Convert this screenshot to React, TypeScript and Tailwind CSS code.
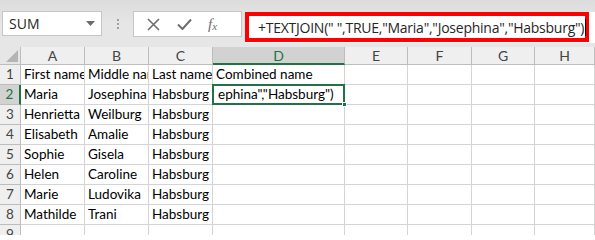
import React from "react";

const cols = [
  { l: "A", w: 64 },
  { l: "B", w: 64 },
  { l: "C", w: 64 },
  { l: "D", w: 132 },
  { l: "E", w: 63 },
  { l: "F", w: 64 },
  { l: "G", w: 63 },
  { l: "H", w: 60 },
];

const data: string[][] = [
  ["First name", "Middle name", "Last name", "Combined name"],
  ["Maria", "Josephina", "Habsburg", ""],
  ["Henrietta", "Weilburg", "Habsburg", ""],
  ["Elisabeth", "Amalie", "Habsburg", ""],
  ["Sophie", "Gisela", "Habsburg", ""],
  ["Helen", "Caroline", "Habsburg", ""],
  ["Marie", "Ludovika", "Habsburg", ""],
  ["Mathilde", "Trani", "Habsburg", ""],
  ["", "", "", ""],
];

export default function App() {
  return (
    <div className="w-[595px] h-[235px] overflow-hidden bg-white" style={{ fontFamily: "Lato, 'Liberation Sans', sans-serif" }}>
      {/* Toolbar */}
      <div className="relative h-[47px] bg-gradient-to-b from-[#dcdcdc] via-[#e6e6e6] to-[#e6e6e6]" style={{ fontFamily: "'Open Sans', 'Liberation Sans', sans-serif" }}>
        <div className="absolute left-[2px] top-[11px] w-[100px] h-[25px] bg-white border border-[#c6c6c6] flex items-center pl-[6px] text-[14px] text-[#262626]">
          SUM
          <svg className="absolute right-[6px] top-[9px]" width="9" height="5" viewBox="0 0 9 5">
            <path d="M0 0 H9 L4.5 5 Z" fill="#6b6b6b" />
          </svg>
        </div>
        <div className="absolute left-[117px] top-[19px] flex flex-col gap-[2px]">
          <div className="w-[2px] h-[2px] bg-[#a0a0a0]" />
          <div className="w-[2px] h-[2px] bg-[#a0a0a0]" />
          <div className="w-[2px] h-[2px] bg-[#a0a0a0]" />
        </div>
        <div className="absolute left-[133px] top-[11px] w-[109px] h-[26px] bg-white border border-[#c6c6c6] flex items-center">
          <svg className="ml-[13px]" width="13" height="13" viewBox="0 0 13 13">
            <path d="M1 1 L12 12 M12 1 L1 12" stroke="#6e6e6e" strokeWidth="1.6" />
          </svg>
          <svg className="ml-[17px]" width="15" height="12" viewBox="0 0 15 12">
            <path d="M1 6.5 L5.5 11 L14 1.5" stroke="#6e6e6e" strokeWidth="2" fill="none" />
          </svg>
          <span className="ml-[16px] text-[#6e6e6e] italic text-[15px] leading-none" style={{ fontFamily: "'Liberation Serif', serif" }}>
            f<span className="text-[11px] relative top-[1px]">x</span>
          </span>
        </div>
        <div className="absolute left-[245px] top-[12px] right-0 h-[31px] bg-white" />
        <div className="absolute left-[245px] top-[12px] w-[344px] h-[30px] border-[4px] border-[#ff0000] flex items-center pl-[9px] text-[14px] text-[#262626] whitespace-nowrap">
          <span className="tracking-[-0.25px]">+TEXTJOIN(" ",TRUE,"Maria","Josephina","Habsburg")</span>
          <span className="w-[1px] h-[17px] bg-black ml-[1px] shrink-0" />
        </div>
      </div>

      {/* Grid */}
      <div className="text-[13.5px] text-black">
        {/* Header row */}
        <div className="flex h-[18px] bg-[#efefef] text-[14px]">
          <div className="relative w-[21px] shrink-0 border-r border-b border-[#bdbdbd] bg-[#e6e6e6]">
            <svg className="absolute right-[2px] bottom-[2px]" width="12" height="12" viewBox="0 0 12 12">
              <path d="M12 0 V12 H0 Z" fill="#b4b4b4" />
            </svg>
          </div>
          {cols.map((c) => (
            <div
              key={c.l}
              style={{ width: c.w }}
              className={
                c.l === "D"
                  ? "shrink-0 flex items-center justify-center border-r border-[#bdbdbd] border-b-2 border-b-[#217346] bg-[#d2d2d2] text-[#217346]"
                  : "shrink-0 flex items-center justify-center border-r border-b border-[#bdbdbd] text-[#444444]"
              }
            >
              {c.l}
            </div>
          ))}
        </div>
        {data.map((row, ri) => (
          <div key={ri} className="flex h-[20px]">
            <div
              className={
                ri === 1
                  ? "w-[21px] shrink-0 flex items-center justify-center bg-[#d2d2d2] text-[#217346] border-r-2 border-r-[#217346] border-b border-[#bdbdbd]"
                  : "w-[21px] shrink-0 flex items-center justify-center bg-[#efefef] text-[#444444] border-r border-b border-[#bdbdbd]"
              }
            >
              {ri + 1}
            </div>
            {cols.map((c, ci) => {
              const text = row[ci] ?? "";
              const isSel = ri === 1 && ci === 3;
              if (isSel) {
                return (
                  <div
                    key={c.l}
                    style={{ width: c.w }}
                    className="relative z-10 shrink-0 border-r border-b border-[#d4d4d4]"
                  >
                    <div className="absolute -left-[1px] -top-[1px] right-[-1px] bottom-[-1px] border-2 border-[#217346] flex items-center pl-[4px] whitespace-nowrap overflow-hidden">
                      ephina","Habsburg")
                    </div>
                    <div className="absolute right-[-3px] bottom-[-3px] w-[5px] h-[5px] bg-[#217346] border border-white" />
                  </div>
                );
              }
              return (
                <div
                  key={c.l}
                  style={{ width: c.w }}
                  className="relative shrink-0 border-r border-b border-[#d4d4d4] flex items-center pl-[3px] whitespace-nowrap overflow-hidden"
                >
                  {text}
                </div>
              );
            })}
          </div>
        ))}
      </div>
    </div>
  );
}
